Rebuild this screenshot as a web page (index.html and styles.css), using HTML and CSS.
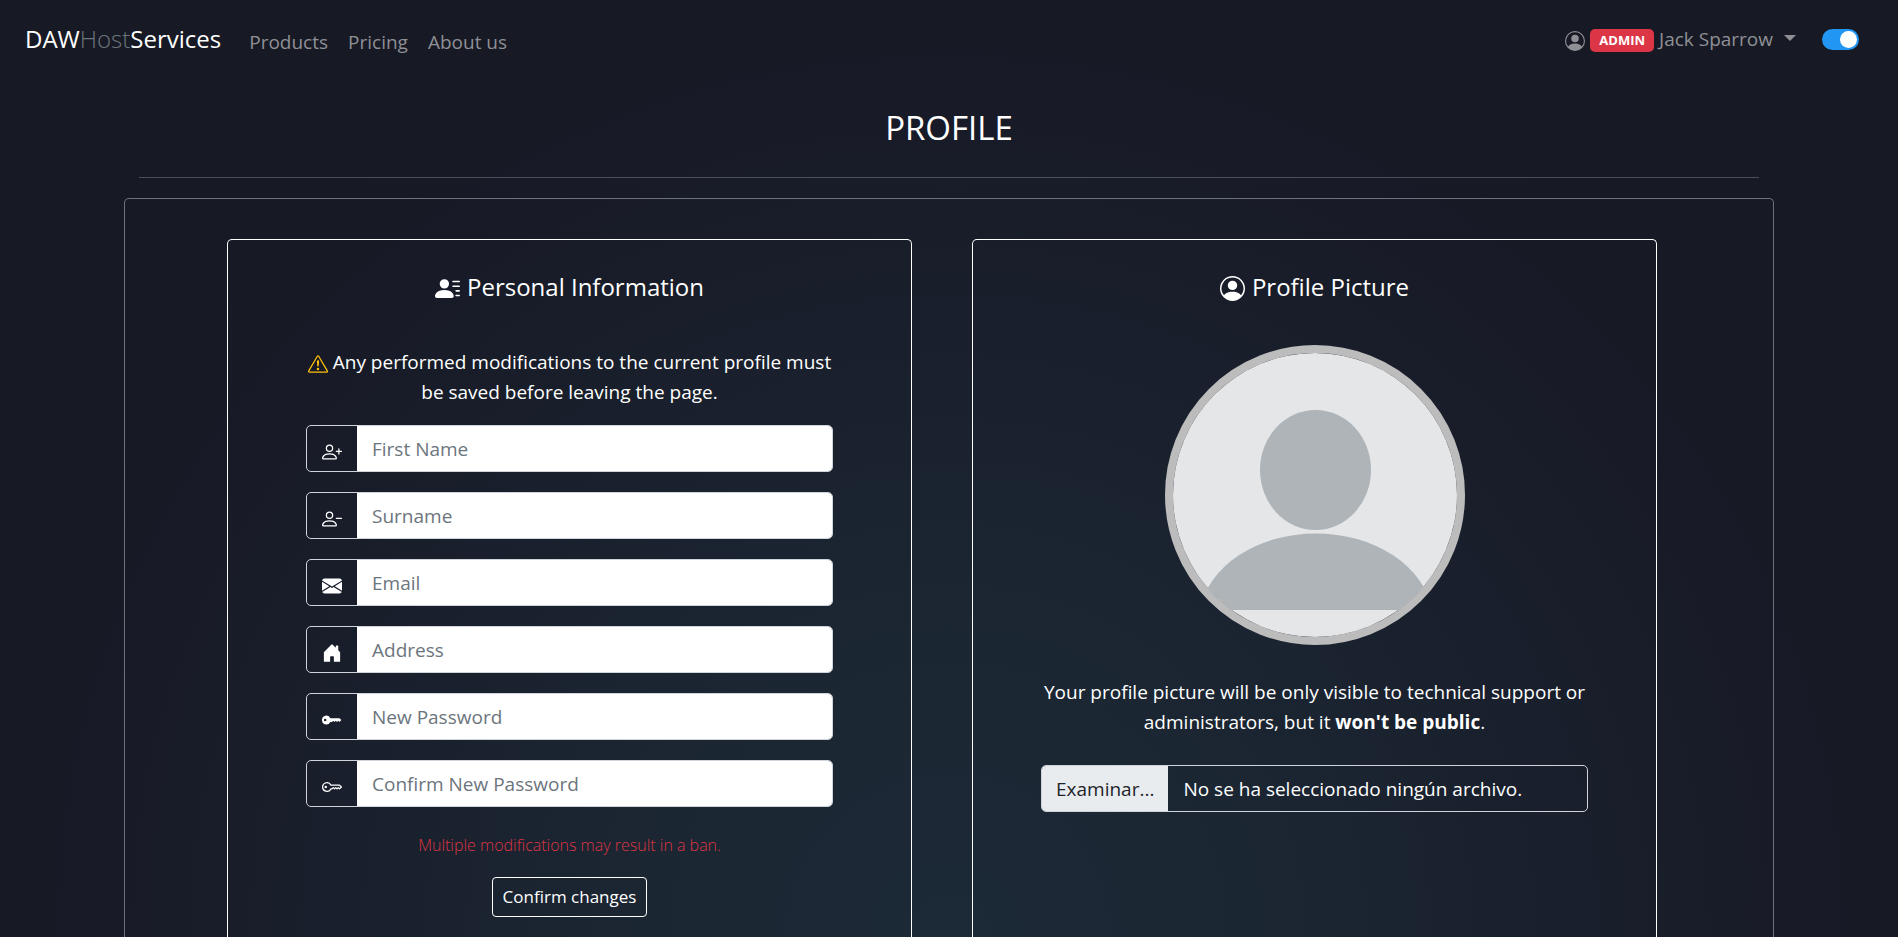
FILE: index.html
```html
<!DOCTYPE html>
<html lang="en">
<head>
<meta charset="utf-8">
<meta name="viewport" content="width=device-width, initial-scale=1">
<title>Profile - DAWHostServices</title>
<link rel="stylesheet" href="styles.css">
</head>
<body>
<nav class="navbar">
  <a class="brand" href="#">DAW<span class="brand-muted">Host</span>Services</a>
  <ul class="nav-links">
    <li><a href="#">Products</a></li>
    <li><a href="#">Pricing</a></li>
    <li><a href="#">About us</a></li>
  </ul>
  <div class="nav-user">
    <a class="user-menu" href="#">
      <svg class="icon" viewBox="0 0 16 16" aria-hidden="true"><path d="M11 6a3 3 0 1 1-6 0 3 3 0 0 1 6 0z"/><path fill-rule="evenodd" d="M0 8a8 8 0 1 1 16 0A8 8 0 0 1 0 8zm8-7a7 7 0 0 0-5.468 11.37C3.242 11.226 4.805 10 8 10s4.757 1.225 5.468 2.37A7 7 0 0 0 8 1z"/></svg>
      <span class="badge">ADMIN</span>
      <span class="user-name">Jack Sparrow</span>
      <span class="caret"></span>
    </a>
    <input class="switch" type="checkbox" aria-label="Dark mode" checked>
  </div>
</nav>

<main class="container">
  <h1 class="page-title">PROFILE</h1>
  <hr class="rule">
  <div class="panel">
    <section class="card">
      <h2 class="card-title">
        <svg class="icon icon-lg" viewBox="0 0 16 16" aria-hidden="true"><path d="M6 8a3 3 0 1 0 0-6 3 3 0 0 0 0 6zm-5 6s-1 0-1-1 1-4 6-4 6 3 6 4-1 1-1 1H1zM11 3.500a.5.5 0 0 1 .5-.5h4a.5.5 0 0 1 0 1h-4a.5.5 0 0 1-.5-.5zm.5 2.500a.5.5 0 0 0 0 1h4a.5.5 0 0 0 0-1h-4zm2 3a.5.5 0 0 0 0 1h2a.5.5 0 0 0 0-1h-2zm0 3a.5.5 0 0 0 0 1h2a.5.5 0 0 0 0-1h-2z"/></svg>
        Personal Information
      </h2>
      <form class="profile-form">
        <p class="notice"><svg class="icon warning" viewBox="0 0 16 16" aria-hidden="true"><path d="M7.938 2.016A.13.13 0 0 1 8.002 2a.13.13 0 0 1 .063.016.146.146 0 0 1 .054.057l6.857 11.667c.036.06.035.124.002.183a.163.163 0 0 1-.054.06.116.116 0 0 1-.066.017H1.146a.115.115 0 0 1-.066-.017.163.163 0 0 1-.054-.06.176.176 0 0 1 .002-.183L7.884 2.073a.147.147 0 0 1 .054-.057zm1.044-.45a1.130 1.130 0 0 0-1.960 0L.165 13.233c-.457.778.091 1.767.98 1.767h13.713c.889 0 1.438-.990.98-1.767L8.982 1.566z"/><path d="M7.002 12a1 1 0 1 1 2 0 1 1 0 0 1-2 0zM7.100 5.995a.905.905 0 1 1 1.800 0l-.350 3.507a.552.552 0 0 1-1.100 0L7.100 5.995z"/></svg> Any performed modifications to the current profile must be saved before leaving the page.</p>
        <div class="field">
          <label class="addon" for="first-name"><svg class="icon" viewBox="0 0 16 16" aria-hidden="true"><path d="M6 8a3 3 0 1 0 0-6 3 3 0 0 0 0 6zm2-3a2 2 0 1 1-4 0 2 2 0 0 1 4 0zm4 8c0 1-1 1-1 1H1s-1 0-1-1 1-4 6-4 6 3 6 4zm-1-.004c-.001-.246-.154-.986-.832-1.664C9.516 10.680 8.289 10 6 10c-2.290 0-3.516.680-4.168 1.332-.678.678-.830 1.418-.832 1.664h10z"/><path fill-rule="evenodd" d="M13.500 5a.5.5 0 0 1 .5.5V7h1.500a.5.5 0 0 1 0 1H14v1.500a.5.5 0 0 1-1 0V8h-1.500a.5.5 0 0 1 0-1H13V5.500a.5.5 0 0 1 .5-.5z"/></svg></label>
          <input class="text-input" id="first-name" type="text" placeholder="First Name">
        </div>
        <div class="field">
          <label class="addon" for="surname"><svg class="icon" viewBox="0 0 16 16" aria-hidden="true"><path d="M6 8a3 3 0 1 0 0-6 3 3 0 0 0 0 6zm2-3a2 2 0 1 1-4 0 2 2 0 0 1 4 0zm4 8c0 1-1 1-1 1H1s-1 0-1-1 1-4 6-4 6 3 6 4zm-1-.004c-.001-.246-.154-.986-.832-1.664C9.516 10.680 8.289 10 6 10c-2.290 0-3.516.680-4.168 1.332-.678.678-.830 1.418-.832 1.664h10z"/><path fill-rule="evenodd" d="M11 7.500a.5.5 0 0 1 .5-.5h4a.5.5 0 0 1 0 1h-4a.5.5 0 0 1-.5-.5z"/></svg></label>
          <input class="text-input" id="surname" type="text" placeholder="Surname">
        </div>
        <div class="field">
          <label class="addon" for="email"><svg class="icon" viewBox="0 0 16 16" aria-hidden="true"><path d="M.05 3.555A2 2 0 0 1 2 2h12a2 2 0 0 1 1.950 1.555L8 8.414.05 3.555zM0 4.697v7.104l5.803-3.558L0 4.697zM6.761 8.830l-6.570 4.027A2 2 0 0 0 2 14h12a2 2 0 0 0 1.808-1.144l-6.570-4.027L8 9.586l-1.239-.757zm3.436-.586L16 11.801V4.697l-5.803 3.546z"/></svg></label>
          <input class="text-input" id="email" type="email" placeholder="Email">
        </div>
        <div class="field">
          <label class="addon" for="address"><svg class="icon" viewBox="0 0 16 16" aria-hidden="true"><path d="M6.500 14.500v-3.505c0-.245.25-.495.5-.495h2c.25 0 .5.25.5.5v3.500a.5.5 0 0 0 .5.5h4a.5.5 0 0 0 .5-.5v-7a.5.5 0 0 0-.146-.354L13 5.793V2.500a.5.5 0 0 0-.5-.5h-1a.5.5 0 0 0-.5.5v1.293L8.354 1.146a.5.5 0 0 0-.708 0l-6 6A.5.5 0 0 0 1.500 7.500v7a.5.5 0 0 0 .5.5h4a.5.5 0 0 0 .5-.5z"/></svg></label>
          <input class="text-input" id="address" type="text" placeholder="Address">
        </div>
        <div class="field">
          <label class="addon" for="new-password"><svg class="icon" viewBox="0 0 16 16" aria-hidden="true"><path d="M3.500 11.500a3.500 3.500 0 1 1 3.163-5H14L15.500 8 14 9.500l-1-1-1 1-1-1-1 1-1-1-1 1H6.663a3.500 3.500 0 0 1-3.163 2zM2.500 9a1 1 0 1 0 0-2 1 1 0 0 0 0 2z"/></svg></label>
          <input class="text-input" id="new-password" type="password" placeholder="New Password">
        </div>
        <div class="field">
          <label class="addon" for="confirm-password"><svg class="icon" viewBox="0 0 16 16" aria-hidden="true"><path d="M0 8a4 4 0 0 1 7.465-2H14a.5.5 0 0 1 .354.146l1.500 1.500a.5.5 0 0 1 0 .708l-1.500 1.500a.5.5 0 0 1-.708 0L13 9.207l-.646.647a.5.5 0 0 1-.708 0L11 9.207l-.646.647a.5.5 0 0 1-.708 0L9 9.207l-.646.647A.5.5 0 0 1 8 10h-.535A4 4 0 0 1 0 8zm4-3a3 3 0 1 0 2.712 4.285A.5.5 0 0 1 7.163 9h.630l.853-.854a.5.5 0 0 1 .708 0l.646.647.646-.647a.5.5 0 0 1 .708 0l.646.647.646-.647a.5.5 0 0 1 .708 0l.646.647.793-.793-1-1h-6.630a.5.5 0 0 1-.451-.285A3 3 0 0 0 4 5z"/><path d="M4 8a1 1 0 1 1-2 0 1 1 0 0 1 2 0z"/></svg></label>
          <input class="text-input" id="confirm-password" type="password" placeholder="Confirm New Password">
        </div>
        <p class="ban-note">Multiple modifications may result in a ban.</p>
        <button class="submit" type="submit">Confirm changes</button>
      </form>
    </section>

    <section class="card">
      <h2 class="card-title">
        <svg class="icon icon-lg" viewBox="0 0 16 16" aria-hidden="true"><path d="M11 6a3 3 0 1 1-6 0 3 3 0 0 1 6 0z"/><path fill-rule="evenodd" d="M0 8a8 8 0 1 1 16 0A8 8 0 0 1 0 8zm8-7a7 7 0 0 0-5.468 11.370C3.242 11.226 4.805 10 8 10s4.757 1.225 5.468 2.370A7 7 0 0 0 8 1z"/></svg>
        Profile Picture
      </h2>
      <div class="picture">
        <svg class="avatar" viewBox="0 0 284 284" role="img" aria-label="Profile picture">
          <rect width="284" height="284" fill="#e4e6e8"/>
          <g fill="#aeb4b8">
            <ellipse cx="142.500" cy="117" rx="55.500" ry="60"/>
            <path d="M27 257A117 88 0 0 1 259 257z"/>
          </g>
        </svg>
        <p class="picture-note">Your profile picture will be only visible to technical support or administrators, but it <strong>won't be public</strong>.</p>
        <label class="file" for="picture-file">
          <input class="file-native" id="picture-file" type="file">
          <span class="file-button">Examinar...</span>
          <span class="file-name">No se ha seleccionado ningún archivo.</span>
        </label>
      </div>
    </section>
  </div>
</main>
</body>
</html>
```
FILE: styles.css
```css
* { box-sizing: border-box; }

html { height: 100%; }

body {
  height: 100%;
  margin: 0;
  overflow: hidden;
  display: flex;
  flex-direction: column;
  color: #fff;
  font-family: "Open Sans", "Noto Sans", sans-serif;
  font-size: 19px;
  line-height: 30px;
  background: radial-gradient(ellipse at bottom, #1c2936 0%, #1b2632 25%, #191e2b 50%, #171924 72%);
}

a { color: inherit; text-decoration: none; }
p, h1, h2, ul { margin: 0; padding: 0; }
input, button { font: inherit; }

.icon {
  width: 20px;
  height: 20px;
  fill: currentColor;
  flex: none;
}

.icon-lg { width: 25px; height: 25px; margin-top: 4px; }

.navbar {
  flex: none;
  display: flex;
  align-items: center;
  height: 80px;
  padding: 0 39px 2px 25px;
}

.brand { font-size: 24px; }
.brand-muted { color: #6c757d; font-weight: 300; }

.nav-links {
  display: flex;
  gap: 20px;
  margin-left: 28px;
  padding-top: 5px;
  list-style: none;
  color: #8f9096;
}

.nav-user {
  display: flex;
  align-items: center;
  gap: 26px;
  margin-left: auto;
}

.user-menu {
  display: flex;
  align-items: center;
  gap: 5px;
  color: #8f9096;
}

.user-menu .icon { margin-top: 3px; }

.badge {
  margin-top: 2px;
  padding: 0 9px;
  border-radius: 5px;
  background: #dc3545;
  color: #fff;
  font-size: 13px;
  font-weight: 700;
  line-height: 23px;
}

.caret {
  margin: 0 0 2px 6px;
  border: 6px solid transparent;
  border-top-color: currentColor;
  border-bottom: 0;
}

.switch {
  appearance: none;
  display: flex;
  justify-content: flex-end;
  align-items: center;
  width: 37px;
  height: 21px;
  margin: 0;
  padding: 2px;
  border-radius: 11px;
  background: #2196f3;
}

.switch::before {
  content: "";
  width: 17px;
  height: 17px;
  border-radius: 50%;
  background: #fff;
}

.switch:not(:checked) { justify-content: flex-start; background: #6c757d; }

.container {
  flex: 1;
  width: 100%;
  max-width: 1650px;
  min-height: 0;
  margin: 0 auto;
  display: flex;
  flex-direction: column;
}

.page-title {
  padding-top: 28px;
  font-size: 33px;
  font-weight: 400;
  line-height: 40px;
  text-align: center;
}

.rule {
  width: calc(100% - 30px);
  height: 1px;
  margin: 29px auto 20px;
  border: 0;
  background: #4a4e58;
}

.panel {
  flex: 1;
  display: flex;
  gap: 60px;
  padding: 40px 116px 0 102px;
  border: 1px solid #6c717a;
  border-bottom: 0;
  border-radius: 5px 5px 0 0;
}

.card {
  flex: 1;
  min-width: 0;
  padding: 29px 68px 0;
  border: 1px solid #fff;
  border-bottom: 0;
  border-radius: 5px 5px 0 0;
}

.card-title {
  display: flex;
  justify-content: center;
  align-items: center;
  gap: 7px;
  font-size: 24px;
  font-weight: 400;
  line-height: 35px;
}

.profile-form {
  display: flex;
  flex-direction: column;
  padding: 43px 10px 0;
}

.notice { margin-bottom: 18px; text-align: center; }
.warning { color: #ffc107; vertical-align: -5px; }

.field {
  display: flex;
  height: 47px;
  margin-bottom: 20px;
  border: 1px solid #ced4da;
  border-radius: 5px;
  overflow: hidden;
}

.addon {
  display: flex;
  justify-content: center;
  align-items: center;
  width: 50px;
  padding-top: 6px;
}

.text-input {
  flex: 1;
  min-width: 0;
  padding: 1px 15px 0;
  border: 0;
  background: #fff;
  color: #212529;
}

.text-input::placeholder { color: #6c757d; opacity: 1; }

.ban-note {
  margin: 3px 0 17px;
  color: #dc3545;
  font-size: 16px;
  font-weight: 300;
  text-align: center;
}

.submit {
  align-self: center;
  padding: 4px 10px;
  border: 1px solid #fff;
  border-radius: 4px;
  background: transparent;
  color: #fff;
  font-size: 17px;
}

.picture {
  display: flex;
  flex-direction: column;
  align-items: center;
  padding-top: 41px;
}

.avatar {
  width: 300px;
  height: 300px;
  border: 8px solid #bcbcbc;
  border-radius: 50%;
}

.picture-note { margin: 32px 0 28px; text-align: center; }

.file {
  display: flex;
  align-self: stretch;
  height: 47px;
  border: 1px solid #ced4da;
  border-radius: 5px;
  overflow: hidden;
  line-height: 47px;
}

.file-native {
  position: absolute;
  width: 1px;
  height: 1px;
  opacity: 0;
}

.file-button {
  padding: 0 14px;
  background: #e9ecef;
  color: #212529;
}

.file-name { padding: 0 15px; }
```
